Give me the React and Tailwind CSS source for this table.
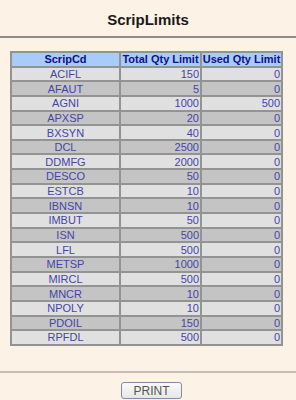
const rows = [
    ['ACIFL', '150', '0'],
    ['AFAUT', '5', '0'],
    ['AGNI', '1000', '500'],
    ['APXSP', '20', '0'],
    ['BXSYN', '40', '0'],
    ['DCL', '2500', '0'],
    ['DDMFG', '2000', '0'],
    ['DESCO', '50', '0'],
    ['ESTCB', '10', '0'],
    ['IBNSN', '10', '0'],
    ['IMBUT', '50', '0'],
    ['ISN', '500', '0'],
    ['LFL', '500', '0'],
    ['METSP', '1000', '0'],
    ['MIRCL', '500', '0'],
    ['MNCR', '10', '0'],
    ['NPOLY', '10', '0'],
    ['PDOIL', '150', '0'],
    ['RPFDL', '500', '0'],
];

const ScripLimits = () => {
    return (
        <div className="w-[296px] h-[400px] bg-[#fdf2e6] font-['Liberation_Sans',Arial,sans-serif] overflow-hidden">
            {/* Title */}
            <div className="h-[36px] flex items-center justify-center">
                <h1 className="text-[15px] font-bold text-[#1a1a1a] leading-none pt-[2px]">ScripLimits</h1>
            </div>
            <div className="h-[2px] bg-[#8c8c8c]"></div>

            {/* Table */}
            <div className="pl-[10px] mt-[13px]">
                <table className="table-fixed w-[271px] border-collapse border-2 border-[#939393] text-[11px] leading-[12px]">
                    <colgroup>
                        <col className="w-[109px]" />
                        <col className="w-[81px]" />
                        <col className="w-[81px]" />
                    </colgroup>
                    <thead>
                        <tr className="bg-[#a9cbfb] text-[#10108a] font-bold">
                            <th className="h-[14.65px] p-0 border-2 border-[#939393] text-center">ScripCd</th>
                            <th className="h-[14.65px] p-0 border-2 border-[#939393] text-center whitespace-nowrap">Total Qty Limit</th>
                            <th className="h-[14.65px] p-0 border-2 border-[#939393] text-center whitespace-nowrap">Used Qty Limit</th>
                        </tr>
                    </thead>
                    <tbody className="text-[#4444a8]">
                        {rows.map(([cd, total, used], i) => (
                            <tr key={cd} className={i % 2 === 0 ? 'bg-[#e0e0e0]' : 'bg-[#c4c4c4]'}>
                                <td className="h-[14.65px] p-0 border-2 border-[#939393] text-center">{cd}</td>
                                <td className="h-[14.65px] p-0 pr-[1px] border-2 border-[#939393] text-right">{total}</td>
                                <td className="h-[14.65px] p-0 pr-[1px] border-2 border-[#939393] text-right">{used}</td>
                            </tr>
                        ))}
                    </tbody>
                </table>
            </div>

            {/* Footer */}
            <div className="mt-[25px] h-[2px] bg-[#c7beb4]"></div>
            <div className="pl-[121px] mt-[5px]">
                <button className="w-[61px] h-[17px] rounded-[3px] border border-[#7d8ea6] bg-gradient-to-b from-[#fbfbfb] to-[#e6e6e6] text-[12px] leading-none text-[#555555]">
                    PRINT
                </button>
            </div>
        </div>
    );
};

export default ScripLimits;
